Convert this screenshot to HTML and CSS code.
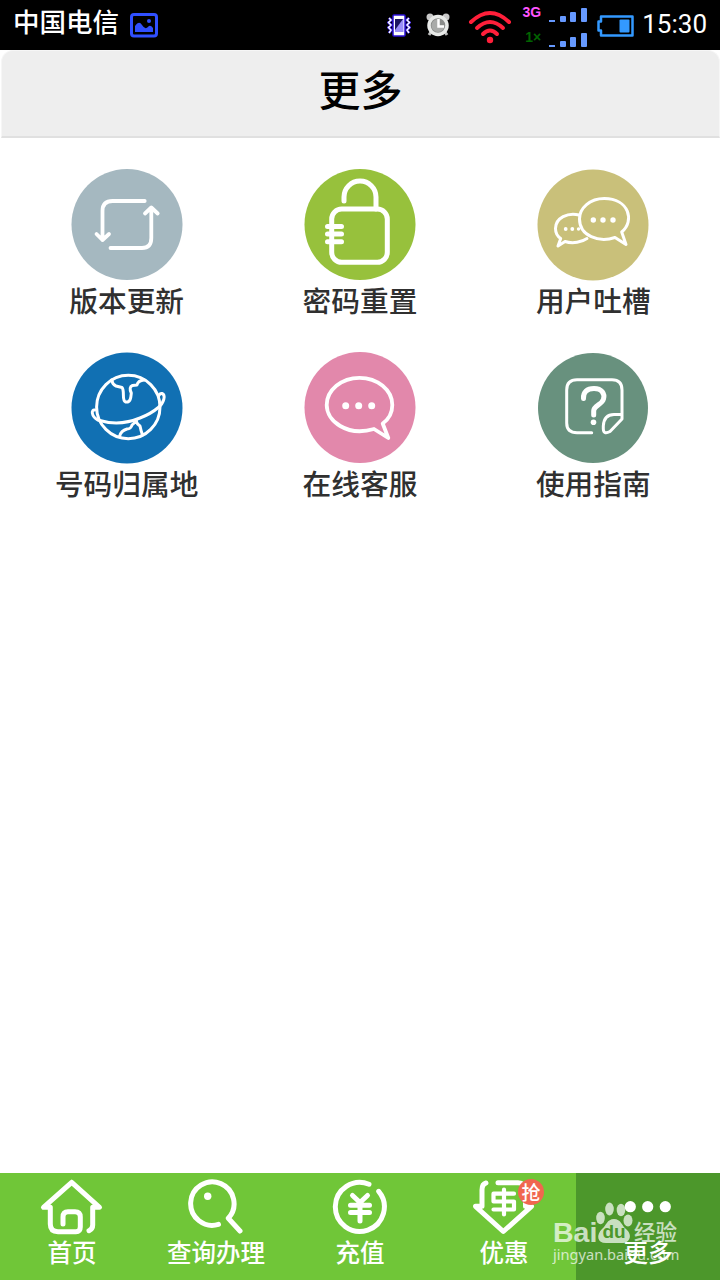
FILE: index.html
```html
<!DOCTYPE html>
<html lang="zh-CN">
<head>
    <meta charset="UTF-8">
    <title>更多</title>
    <link rel="stylesheet" href="styles.css">
</head>
<body>
    <div class="status-bar">
        <span class="carrier">中国电信</span>
        <svg class="icon-image" width="28" height="25" viewBox="0 0 28 25">
            <rect x="1.5" y="1.5" width="25" height="21.5" rx="2.5" fill="none" stroke="#3050ff" stroke-width="3"/>
            <path d="M5 19V13Q9 7 12 12Q15 17 18 14Q20 11 23 15V19Z" fill="#3050ff"/>
            <circle cx="19" cy="8" r="2" fill="#3050ff"/>
        </svg>
        <div class="status-icons">
            <svg class="icon-vibrate" width="24" height="24" viewBox="0 0 24 24">
                <path d="M2 4L4 6L1.500 8.500L4 11L1.500 13.500L4 16L2 19M22 4L20 6L22.500 8.500L20 11L22.500 13.500L20 16L22 19" fill="none" stroke="#2b10d8" stroke-width="3"/>
                <rect x="6" y="1" width="12" height="21" rx="1" fill="#fff" stroke="#2b10d8" stroke-width="1.500"/>
                <rect x="8" y="5" width="8.500" height="13" fill="#9a8ef8"/>
                <path d="M8 5H16L8 16Z" fill="#1b1560"/>
                <path d="M2 4L4 6L1.500 8.500L4 11L1.500 13.500L4 16L2 19M22 4L20 6L22.500 8.500L20 11L22.500 13.500L20 16L22 19" fill="none" stroke="#fff" stroke-width="1.500"/>
            </svg>
            <svg class="icon-alarm" width="26" height="26" viewBox="0 0 26 26">
                <circle cx="5" cy="5" r="3.500" fill="#c8c8c8"/>
                <circle cx="21" cy="5" r="3.500" fill="#c8c8c8"/>
                <path d="M6 20L4 23M20 20L22 23" stroke="#bbb" stroke-width="3"/>
                <circle cx="13" cy="13.500" r="9" fill="#8a8c8a" stroke="#e8eae8" stroke-width="3.500"/>
                <path d="M13 13.500V7A6.500 6.500 0 1 0 19.500 13.500Z" fill="#a9aba9"/>
                <path d="M13.500 7V14.500H19" fill="none" stroke="#fff" stroke-width="2.500"/>
            </svg>
            <svg class="icon-wifi" width="44" height="34" viewBox="0 0 44 34">
                <g fill="none" stroke="#ff1f3a" stroke-width="4" stroke-linecap="round">
                    <path d="M3 12Q22 -6 41 12"/>
                    <path d="M9 18Q22 6 35 18"/>
                    <path d="M15 24Q22 17 29 24"/>
                </g>
                <circle cx="22" cy="30" r="3.200" fill="#ff1f3a"/>
            </svg>
            <div class="network">
                <span class="net-3g">3G</span>
                <span class="net-1x">1×</span>
            </div>
            <svg class="icon-signal" width="40" height="42" viewBox="0 0 40 42">
                <g fill="#6699ff">
                    <rect x="1" y="13" width="6" height="2"/>
                    <rect x="12" y="9" width="6" height="6" rx="1"/>
                    <rect x="22" y="5" width="6" height="10" rx="1"/>
                    <rect x="33" y="1" width="6" height="14" rx="1"/>
                    <rect x="1" y="38" width="6" height="2"/>
                    <rect x="12" y="34" width="6" height="6" rx="1"/>
                    <rect x="22" y="30" width="6" height="10" rx="1"/>
                    <rect x="33" y="26" width="6" height="14" rx="1"/>
                </g>
            </svg>
            <svg class="icon-battery" width="38" height="22" viewBox="0 0 38 22">
                <path d="M4 1.500H35.500V20.500H4V15.500H1.500V6.500H4Z" fill="none" stroke="#3399ff" stroke-width="2.500" stroke-linejoin="round"/>
                <rect x="22.500" y="4.500" width="10" height="13" rx="1" fill="#3399ff"/>
            </svg>
            <span class="time">15:30</span>
        </div>
    </div>

    <div class="header"><h1>更多</h1></div>

    <div class="grid">
        <div class="item">
            <svg class="item-icon" viewBox="0 0 112 112">
                <circle cx="56" cy="55.500" r="55.500" fill="#a5b8c0"/>
                <g class="line">
                    <path d="M73.700 32H41.500Q31.500 32 31.500 42V71M25.500 65L31.500 71L38 65"/>
                    <path d="M39.500 79H71Q80.300 79 80.300 69V39M74 44.500L80.300 38.500L86.700 44.500"/>
                </g>
            </svg>
            <span>版本更新</span>
        </div>
        <div class="item">
            <svg class="item-icon" viewBox="0 0 112 112">
                <circle cx="56" cy="55.500" r="55.500" fill="#97c13c"/>
                <g class="line thick">
                    <rect x="27.700" y="40" width="55.600" height="53.300" rx="10"/>
                    <path d="M40 32V28A16 16 0 0 1 72 28V40"/>
                    <path d="M23.500 57.500H37.500M23.500 65H37.500M23.500 72.700H37.500"/>
                </g>
            </svg>
            <span>密码重置</span>
        </div>
        <div class="item">
            <svg class="item-icon" viewBox="0 0 112 112">
                <circle cx="56" cy="56" r="55.500" fill="#c9c07a"/>
                <g class="line thin">
                    <path d="M42 46C31 43 18.500 49 18.500 59.500Q18.500 66 23.700 69.500L21 77L28 72.500C36 75 45 73 50 69.500"/>
                    <path d="M84.700 63C98 52 92 29.500 67.300 29.500C53 29.500 42.500 39 42.500 50C42.500 67 62 74 78 68.500L89 75.500Z"/>
                </g>
                <g fill="#fff">
                    <circle cx="56.300" cy="51" r="2.700"/><circle cx="66" cy="51" r="2.700"/><circle cx="76" cy="51" r="2.700"/>
                    <circle cx="28.700" cy="60" r="1.900"/><circle cx="35.300" cy="60" r="1.900"/><circle cx="41.500" cy="60" r="1.700"/>
                </g>
            </svg>
            <span>用户吐槽</span>
        </div>
        <div class="item">
            <svg class="item-icon" viewBox="0 0 112 112">
                <circle cx="56" cy="56" r="55.500" fill="#1170b3"/>
                <g class="line thin">
                    <circle cx="57.300" cy="55" r="31.700"/>
                    <path d="M24 58C20 57 20 64 26.700 68C43 73 57 71 69 66C77 63 82 60 87.300 55.500C93 51 95 43 91 41.500Q89 41 87.500 44"/>
                    <path d="M40.700 28Q41.500 32.500 45 34L51 35.500C54 39 50.500 48 54.500 50C60 51 60 44 60.300 41Q57.500 35 61.500 33.500L66 33Q67 28.500 73 28"/>
                    <path d="M48.500 84.500Q50 78.500 56 77Q60 77 61 73L65.500 69M65 69Q66 72 69 74Q70 79 71.500 83"/>
                </g>
            </svg>
            <span>号码归属地</span>
        </div>
        <div class="item">
            <svg class="item-icon" viewBox="0 0 112 112">
                <circle cx="56" cy="55.500" r="55.500" fill="#e288ab"/>
                <g class="line">
                    <path d="M78.700 71.500C85 67 88.300 60 88.300 53C88.300 38 73.500 25.800 55.500 25.800C37.500 25.800 22.700 38 22.700 53C22.700 69 43 85 70 77L84.300 86Z"/>
                </g>
                <g fill="#fff">
                    <circle cx="41.700" cy="53.700" r="3.500"/><circle cx="54.700" cy="53.700" r="3.500"/><circle cx="67.700" cy="53.700" r="3.500"/>
                </g>
            </svg>
            <span>在线客服</span>
        </div>
        <div class="item">
            <svg class="item-icon" viewBox="0 0 112 112">
                <circle cx="56" cy="56" r="55" fill="#68917e"/>
                <g class="line thin">
                    <path d="M54.700 80.700H40Q29.700 80.700 29.700 71V38Q29.700 27.700 40 27.700H75Q85 27.700 85 38V67L73 79.500Q66.500 83 66.300 77V74Q67 62.500 77 62.500H85"/>
                </g>
                <path class="line thick" d="M46.500 46.500C46 40 50 36.500 57 36.500C65 36.500 68 42 66.500 47C65 53 56.700 53 56.700 59V63"/>
                <circle cx="56.500" cy="70.300" r="2.800" fill="#fff"/>
            </svg>
            <span>使用指南</span>
        </div>
    </div>

    <div class="tabs">
        <div class="tab">
            <svg class="tab-icon" viewBox="0 0 72 58">
                <path d="M35.700 5.300L7.500 30.300H14.300V47Q14.300 54.700 22 54.700H40Q44.300 54.700 44.300 50V40Q44.300 34.700 39 34.700H32Q27 34.700 27 40V47M35.700 5.300L63.500 30.300H56.700V48Q56.700 52 53 53.700"/>
            </svg>
            <span>首页</span>
        </div>
        <div class="tab">
            <svg class="tab-icon" viewBox="0 0 72 58">
                <path d="M38.500 47.400A21.700 21.700 0 1 1 48.300 41.300L60 54"/>
                <circle class="dot" cx="27.700" cy="19.300" r="3.700"/>
            </svg>
            <span>查询办理</span>
        </div>
        <div class="tab">
            <svg class="tab-icon" viewBox="0 0 72 58">
                <path d="M45 7.200A24.500 24.500 0 1 0 54.700 14.300"/>
                <path d="M28.500 18.500L36 25.500L43.500 18.500M36 25.500V44M26.500 28.200H45.500M26.500 35.500H45.500"/>
            </svg>
            <span>充值</span>
        </div>
        <div class="tab">
            <svg class="tab-icon" viewBox="0 0 72 58">
                <path d="M18 6Q14 7 14 13V29.300H7.500L35.300 54.500L63.500 29.300H57.500V14Q57 5.700 50 5.700H30"/>
                <path class="coupon" d="M46 16.700H25.500V24.500H46V32.500H25.500M36 12.500V37.500"/>
            </svg>
            <span>优惠</span>
            <em class="badge">抢</em>
        </div>
        <div class="tab active">
            <svg class="tab-icon" viewBox="0 0 72 58">
                <circle class="dot" cx="18.300" cy="29.700" r="5.600"/>
                <circle class="dot" cx="35.700" cy="29.700" r="5.600"/>
                <circle class="dot" cx="53.300" cy="29.700" r="5.600"/>
            </svg>
            <span>更多</span>
        </div>

        <div class="watermark">
            <div class="logo">
                <b class="bai">Bai</b>
                <div class="paw">
                    <svg width="38" height="42" viewBox="0 0 38 42">
                        <ellipse cx="5.500" cy="16" rx="4.300" ry="6.200"/>
                        <ellipse cx="14.500" cy="7" rx="4.300" ry="6.500"/>
                        <ellipse cx="26" cy="8" rx="4.300" ry="6.200"/>
                        <ellipse cx="33" cy="18.500" rx="4.500" ry="6"/>
                        <path d="M19 17C26 17 27 24 31 27C38 33 35 41 27 41H11C2 41 1 33 7 27C11 24 12 17 19 17Z"/>
                    </svg>
                    <b class="du">du</b>
                </div>
                <b class="jingyan">经验</b>
            </div>
            <div class="url">jingyan.baidu.com</div>
        </div>
    </div>
</body>
</html>
```
FILE: styles.css
```css
* {
    box-sizing: border-box;
}
body {
    margin: 0;
    height: 1280px;
    display: flex;
    flex-direction: column;
    background: #fff;
    font-family: "Noto Sans CJK SC", sans-serif;
    overflow: hidden;
}
svg {
    display: block;
    flex: none;
}

/* status bar */
.status-bar {
    height: 50px;
    flex: none;
    display: flex;
    align-items: flex-start;
    padding: 0 13px;
    background: #000;
    color: #fff;
}
.carrier {
    font-size: 26.5px;
    font-weight: 500;
    line-height: 41px;
    white-space: nowrap;
}
.icon-image {
    margin: 13px 0 0 11px;
}
.status-icons {
    display: flex;
    align-items: flex-start;
    margin-left: auto;
}
.icon-vibrate {
    margin: 14px 14px 0 0;
}
.icon-alarm {
    margin: 12px 17px 0 0;
}
.icon-wifi {
    margin-top: 10px;
}
.network {
    width: 36px;
    height: 50px;
    padding: 5px 7px 0 0;
    display: flex;
    flex-direction: column;
    align-items: flex-end;
    gap: 11px;
    font: bold 14px/14px "Liberation Sans", sans-serif;
}
.net-3g {
    color: #ff55ff;
}
.net-1x {
    color: #006400;
}
.icon-signal {
    margin: 7px 9px 0 0;
}
.icon-battery {
    margin: 15px 7px 0 0;
}
.time {
    font: 26px/48px Roboto, sans-serif;
}

/* title */
.header {
    height: 88px;
    flex: none;
    margin: 0 0 0 1px;
    border: 1px solid #f6f6f6;
    border-bottom: 2px solid #e0e0e0;
    border-radius: 12px 12px 0 0;
    background: #eee;
}
.header h1 {
    margin: 0;
    font-size: 42px;
    font-weight: 500;
    line-height: 74px;
    text-align: center;
    color: #000;
}

/* function icons */
.grid {
    flex: 1;
    display: grid;
    grid-template-columns: repeat(3, 1fr);
    grid-auto-rows: 183px;
    padding: 31px 10px 0;
}
.item {
    display: flex;
    flex-direction: column;
    align-items: center;
    font-size: 28.7px;
    font-weight: 500;
    line-height: 38px;
    color: #303030;
}
.item-icon {
    width: 112px;
    height: 112px;
}
.line {
    fill: none;
    stroke: #fff;
    stroke-width: 3.8;
    stroke-linecap: round;
    stroke-linejoin: round;
}
.thin {
    stroke-width: 3;
}
.thick {
    stroke-width: 5;
}

/* bottom tabs */
.tabs {
    position: relative;
    height: 107px;
    flex: none;
    display: flex;
    background: #70c638;
}
.tab {
    position: relative;
    width: 144px;
    padding-top: 4px;
    display: flex;
    flex-direction: column;
    align-items: center;
    font-size: 24.5px;
    font-weight: 500;
    line-height: 34px;
    color: #fff;
}
.tab.active {
    background: #4c972b;
}
.tab-icon {
    width: 72px;
    height: 58px;
    fill: none;
    stroke: #fff;
    stroke-width: 5;
    stroke-linecap: round;
    stroke-linejoin: round;
}
.tab-icon .dot {
    fill: #fff;
    stroke: none;
}
.tab-icon .coupon {
    stroke-width: 4.2;
}
.badge {
    position: absolute;
    left: 86px;
    top: 6px;
    width: 26px;
    height: 26px;
    border-radius: 50%;
    background: #f0674f;
    font-size: 19px;
    font-style: normal;
    line-height: 25px;
    text-align: center;
}

/* site mark over the last tab */
.watermark {
    position: absolute;
    left: 553px;
    top: 29px;
    width: 130px;
    color: #fff;
    opacity: 0.7;
}
.logo {
    height: 42px;
    display: flex;
    align-items: flex-end;
}
.bai {
    width: 42px;
    font: bold 28.5px/23px "Liberation Sans", sans-serif;
}
.paw {
    position: relative;
    width: 38px;
    fill: #fff;
}
.du {
    position: absolute;
    left: 0;
    right: 0;
    bottom: 2px;
    font: bold 19px/20px "Liberation Sans", sans-serif;
    text-align: center;
    color: #4c972b;
}
.jingyan {
    margin-left: 1px;
    font-size: 21.5px;
    font-weight: 500;
    line-height: 27px;
    white-space: nowrap;
}
.url {
    font: 14.6px/20px "Noto Sans", sans-serif;
    white-space: nowrap;
}
```
